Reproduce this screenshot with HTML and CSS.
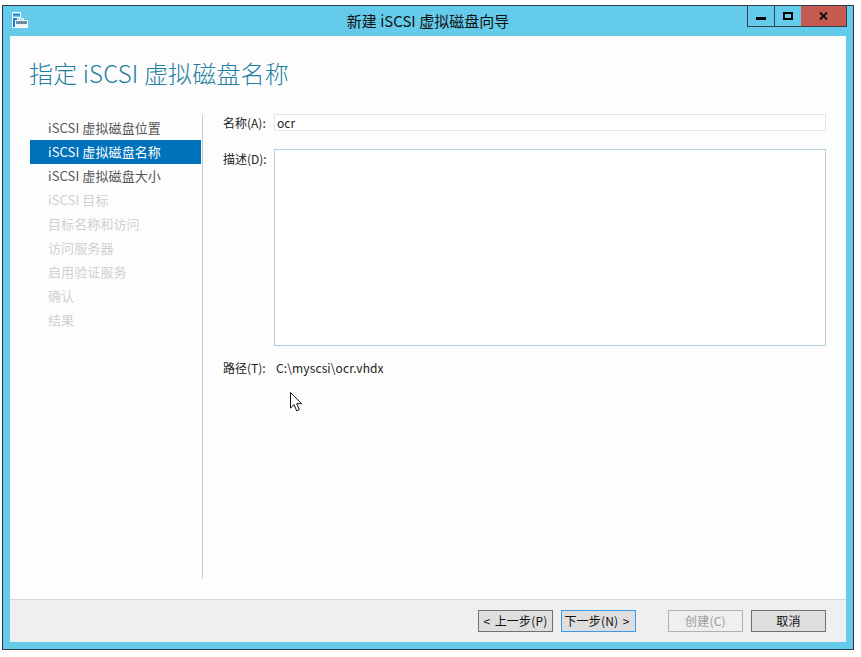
FILE: index.html
```html
<!DOCTYPE html>
<html lang="zh-CN">
<head>
<meta charset="utf-8">
<title>新建 iSCSI 虚拟磁盘向导</title>
<link rel="stylesheet" href="styles.css">
</head>
<body>
<div class="window">
  <header class="titlebar">
    <svg class="app-icon" width="16" height="16" viewBox="0 0 16 16">
      <path d="M0.5 0.5h8v5h-8z" fill="#65cbeb" stroke="#fff"/>
      <path d="M1 2h7v1.5H1z" fill="#2f7fc0"/>
      <path d="M0.5 5.5h5v10h-5z" fill="#1f78c8" stroke="#fff"/>
      <path d="M3.5 8.5h12v7h-12z" fill="#eef3f6" stroke="#fff"/>
      <path d="M4 9h11v3H4z" fill="#6f8ea3"/>
      <path d="M7.5 8.5V6.5h4v2" fill="none" stroke="#fff"/>
    </svg>
    <div class="title">新建 iSCSI 虚拟磁盘向导</div>
    <div class="controls">
      <div class="ctl ctl-min"><span class="glyph-min"></span></div>
      <div class="ctl ctl-max"><span class="glyph-max"></span></div>
      <div class="ctl ctl-close">
        <svg width="9" height="8" viewBox="0 0 9 8"><path d="M1 0.5l7 7M8 0.5l-7 7" stroke="#111" stroke-width="2" fill="none"/></svg>
      </div>
    </div>
  </header>
  <div class="client">
    <main class="main">
      <h1 class="heading">指定 iSCSI 虚拟磁盘名称</h1>
      <div class="body">
        <nav class="steps">
          <div class="step">iSCSI 虚拟磁盘位置</div>
          <div class="step step-active">iSCSI 虚拟磁盘名称</div>
          <div class="step">iSCSI 虚拟磁盘大小</div>
          <div class="step step-off">iSCSI 目标</div>
          <div class="step step-off">目标名称和访问</div>
          <div class="step step-off">访问服务器</div>
          <div class="step step-off">启用验证服务</div>
          <div class="step step-off">确认</div>
          <div class="step step-off">结果</div>
        </nav>
        <section class="form">
          <div class="row row-name">
            <label class="label">名称(A):</label>
            <div class="input">ocr</div>
          </div>
          <div class="row row-desc">
            <label class="label label-desc">描述(D):</label>
            <div class="textarea"></div>
          </div>
          <div class="row row-path">
            <label class="label">路径(T):</label>
            <div class="path">C:\myscsi\ocr.vhdx</div>
          </div>
        </section>
      </div>
    </main>
    <footer class="footer">
      <div class="btn">&lt; 上一步(P)</div>
      <div class="btn btn-focus">下一步(N) &gt;</div>
      <div class="btn btn-disabled btn-gap">创建(C)</div>
      <div class="btn">取消</div>
    </footer>
  </div>
</div>
<svg class="cursor" width="14" height="22" viewBox="0 0 14 22">
  <path d="M1.5 1.5v15.5l3.6-3.4 2.6 6.2 2.6-1.1-2.6-6h4.8z" fill="#fff" stroke="#111" stroke-width="1"/>
</svg>
</body>
</html>
```
FILE: styles.css
```css
* { box-sizing: border-box; }
html, body { margin: 0; padding: 0; background: #fff; }
body {
  width: 861px;
  height: 657px;
  position: relative;
  overflow: hidden;
  font-family: "Noto Sans CJK SC", "Noto Sans", sans-serif;
  font-size: 13px;
  color: #1f1f1f;
}
.window {
  margin: 5px 0 0 2px;
  width: 852px;
  height: 645px;
  background: #65cbeb;
  border: 1px solid #2b3a44;
  display: flex;
  flex-direction: column;
}
.titlebar {
  height: 30px;
  flex: none;
  position: relative;
  display: flex;
  justify-content: center;
}
.app-icon { position: absolute; left: 9px; top: 6px; }
.title { font-size: 15px; line-height: 30px; color: #111; }
.controls {
  position: absolute;
  top: -1px;
  right: 6px;
  height: 22px;
  display: flex;
  border: 1px solid #33414c;
}
.ctl { height: 20px; display: flex; align-items: center; justify-content: center; }
.ctl-min { width: 27px; border-right: 1px solid #33414c; }
.ctl-max { width: 26px; }
.ctl-close { width: 45px; background: #c75a50; }
.glyph-min { width: 10px; height: 3px; background: #000; margin-top: 5px; }
.glyph-max { width: 10px; height: 8px; border: 2px solid #000; }
.client {
  margin: 0 7px 7px 7px;
  flex: 1;
  background: #fdfdfd;
  display: flex;
  flex-direction: column;
  min-height: 0;
}
.main { flex: 1; min-height: 0; padding: 0 20px; display: flex; flex-direction: column; }
.heading {
  margin: 0 0 0 -1px;
  height: 79px;
  padding-top: 18px;
  font-size: 24px;
  line-height: 38px;
  font-weight: 300;
  letter-spacing: 0.15px;
  color: #1f7f9f;
}
.body { display: flex; flex: 1; min-height: 0; padding-bottom: 20px; }
.steps {
  width: 173px;
  flex: none;
  padding-top: 1px;
  padding-right: 1px;
  border-right: 1px solid #c8c8c8;
}
.step {
  height: 24px;
  line-height: 24px;
  padding-left: 18px;
  color: #555;
  letter-spacing: 0.1px;
  white-space: nowrap;
}
.step-active { background: #0072bc; color: #fff; }
.step-off { color: #d0d0d0; }
.form { flex: 1; padding: 0 0 0 20px; }
.row { display: flex; }
.label { width: 51px; flex: none; font-size: 12px; color: #222; white-space: nowrap; }
.row-name { height: 17px; align-items: center; margin-top: -1px; }
.input {
  flex: 1;
  height: 17px;
  border: 1px solid #e4e4e4;
  background: #fff;
  padding-left: 2px;
  line-height: 15px;
  font-size: 12px;
  color: #222;
}
.row-desc { margin-top: 18px; }
.label-desc { line-height: 20px; }
.textarea { flex: 1; height: 197px; border: 1px solid #b3cfe0; background: #fff; }
.row-path { margin-top: 11px; height: 20px; align-items: center; }
.path { font-size: 12px; padding-left: 2px; letter-spacing: 0.12px; color: #222; }
.footer {
  height: 43px;
  flex: none;
  background: #efefef;
  border-top: 1px solid #d8d8d8;
  display: flex;
  justify-content: flex-end;
  align-items: flex-start;
  padding: 10px 20px 0 0;
  gap: 8px;
}
.btn {
  width: 75px;
  height: 22px;
  border: 1px solid #707070;
  background: #dedede;
  font-size: 12px;
  line-height: 20px;
  text-align: center;
  letter-spacing: 0.2px;
  word-spacing: 1.5px;
  color: #111;
  white-space: nowrap;
}
.btn-focus { border-color: #3c9ae8; padding-right: 3px; }
.btn-disabled { background: #efefef; border-color: #b0b0b0; color: #9a9a9a; }
.btn-gap { margin-left: 24px; }
.cursor { position: absolute; left: 289px; top: 391px; }
```
